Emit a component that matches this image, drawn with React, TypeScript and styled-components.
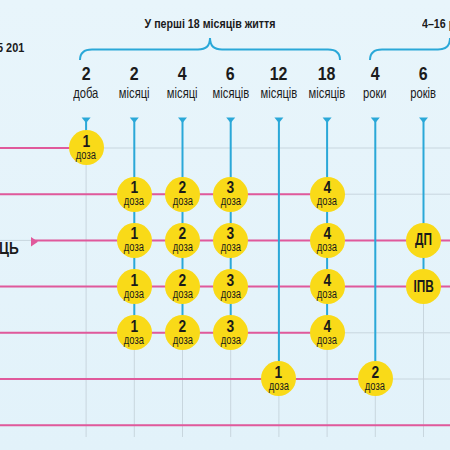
import styled, { createGlobalStyle, css } from "styled-components";

const COLS = [
  { num: "2", unit: "доба" },
  { num: "2", unit: "місяці" },
  { num: "4", unit: "місяці" },
  { num: "6", unit: "місяців" },
  { num: "12", unit: "місяців" },
  { num: "18", unit: "місяців" },
  { num: "4", unit: "роки" },
  { num: "6", unit: "років" },
];

type Dose = { row: number; col: number; num?: string; tag?: string };

const DOSES: Dose[] = [
  { row: 0, col: 0, num: "1" },
  ...[1, 2, 3, 4].flatMap((row) => [
    { row, col: 1, num: "1" },
    { row, col: 2, num: "2" },
    { row, col: 3, num: "3" },
    { row, col: 5, num: "4" },
  ]),
  { row: 2, col: 7, tag: "ДП" },
  { row: 3, col: 7, tag: "ІПВ" },
  { row: 5, col: 4, num: "1" },
  { row: 5, col: 6, num: "2" },
];

// pink row lines: [from x, to x]
const ROWS: [number, number][] = [
  [0, 86],
  [0, 327],
  [33, 450],
  [0, 450],
  [0, 327],
  [0, 375],
  [0, 450],
];

// row index where the blue column line stops
const COL_END = [0, 4, 4, 4, 5, 4, 5, 3];

const colX = (i: number) => 86.1 + i * 48.2;
const rowY = (i: number) => 148 + i * 46.2;

const PINK = "#e0599b";
const BLUE = "#2aa8d8";
const GRID = "#c8d6de";

// condensed look: no narrow face installed, so squeeze Liberation Sans
const narrow = (k: number, origin = "center") => css`
  display: inline-block;
  transform: scaleX(${k});
  transform-origin: ${origin};
`;

const GlobalStyle = createGlobalStyle`
  html, body {
    margin: 0;
    background: #e4f3fa;
    overflow: hidden;
  }
`;

const Page = styled.div`
  position: relative;
  width: 450px;
  height: 450px;
  overflow: hidden;
  background: linear-gradient(#e8f5fb, #e2f2fa);
  font-family: "Liberation Sans", Arial, sans-serif;
  color: #1b1b1b;
`;

const Lines = styled.svg`
  position: absolute;
  left: 0;
  top: 0;
`;

const Chart = styled.div`
  position: relative;
  display: grid;
  grid-template-columns: 62px repeat(8, 48.2px);
  grid-template-rows: 34px 28px 24px 14px 24.9px repeat(7, 46.2px);
`;

const Title = styled.div<{ $from: number; $to: number; $shift: number }>`
  grid-row: 1;
  grid-column: ${(p) => p.$from} / ${(p) => p.$to};
  align-self: end;
  justify-self: ${(p) => (p.$shift ? "start" : "center")};
  margin: 0 0 2px ${(p) => p.$shift}px;
  padding-left: ${(p) => (p.$shift ? 0 : 9)}px;
  white-space: nowrap;
  font-weight: 700;
  font-size: 13px;
  line-height: 16px;
  ${(p) => narrow(0.82, p.$shift ? "left" : "center")}
`;

const Note = styled.div`
  grid-row: 2;
  grid-column: 1;
  align-self: center;
  justify-self: start;
  margin-left: -3px;
  white-space: nowrap;
  font-weight: 700;
  font-size: 13px;
  line-height: 14px;
  ${narrow(0.84, "left")}
`;

const Side = styled.div<{ $row: number }>`
  grid-row: ${(p) => p.$row + 6};
  grid-column: 1;
  align-self: end;
  justify-self: start;
  margin: 0 0 4px -1px;
  font-weight: 700;
  font-size: 17px;
  line-height: 20px;
  ${narrow(0.8, "left")}
`;

const Num = styled.div<{ $col: number }>`
  grid-row: 3;
  grid-column: ${(p) => p.$col + 2};
  justify-self: center;
  align-self: center;
  font-weight: 700;
  font-size: 19px;
  line-height: 20px;
  ${narrow(0.84)}
`;

const Unit = styled.div<{ $col: number }>`
  grid-row: 4;
  grid-column: ${(p) => p.$col + 2};
  justify-self: center;
  align-self: center;
  white-space: nowrap;
  font-size: 14px;
  line-height: 14px;
  ${narrow(0.8)}
`;

const Circle = styled.div<{ $row: number; $col: number }>`
  grid-row: ${(p) => p.$row + 6};
  grid-column: ${(p) => p.$col + 2};
  justify-self: center;
  align-self: center;
  width: 35px;
  height: 35px;
  border-radius: 50%;
  background: #f9da18;
  display: flex;
  flex-direction: column;
  align-items: center;
  justify-content: center;
  color: #1a1a1a;
`;

const DoseNum = styled.span`
  font-weight: 700;
  font-size: 16px;
  line-height: 14px;
  ${narrow(0.86)}
`;

const DoseWord = styled.span`
  font-size: 12px;
  line-height: 12px;
  ${narrow(0.78)}
`;

const Tag = styled.span`
  font-weight: 700;
  font-size: 16px;
  line-height: 16px;
  ${narrow(0.74)}
`;

export default function App() {
  return (
    <Page>
      <GlobalStyle />
      <Lines width={450} height={450} viewBox="0 0 450 450">
        {COLS.map((_, i) => (
          <line key={"gv" + i} x1={colX(i)} x2={colX(i)} y1={124} y2={437} stroke={GRID} strokeWidth={1} />
        ))}
        {ROWS.map((_, r) => (
          <line key={"gh" + r} x1={0} x2={450} y1={rowY(r)} y2={rowY(r)} stroke={GRID} strokeWidth={1} />
        ))}
        {ROWS.map(([a, b], r) => (
          <line key={"p" + r} x1={a} x2={b} y1={rowY(r)} y2={rowY(r)} stroke={PINK} strokeWidth={2} />
        ))}
        <polygon points="31,237 31,246.5 38,241.7" fill={PINK} />
        {COL_END.map((end, i) => (
          <g key={"b" + i}>
            <line x1={colX(i)} x2={colX(i)} y1={120} y2={rowY(end)} stroke={BLUE} strokeWidth={2} />
            <polygon points={`${colX(i) - 4.5},117.5 ${colX(i) + 4.5},117.5 ${colX(i)},123`} fill={BLUE} />
          </g>
        ))}
        <path
          d="M80,60 C80,53 84,49.5 92,49.5 L198,49.5 C205,49.5 210,46 210,38 C210,46 215,49.5 222,49.5 L328,49.5 C336,49.5 340,53 340,60"
          fill="none"
          stroke={BLUE}
          strokeWidth={2}
        />
        <path
          d="M370,60 C370,53 374,49.5 382,49.5 L438,49.5 C445,49.5 450,46 450,38"
          fill="none"
          stroke={BLUE}
          strokeWidth={2}
        />
      </Lines>
      <Chart>
        <Title $from={2} $to={8} $shift={0}>У перші 18 місяців життя</Title>
        <Title $from={9} $to={10} $shift={23}>4–16 років</Title>
        <Note>5 201</Note>
        {COLS.map((c, i) => (
          <Num key={"n" + i} $col={i}>{c.num}</Num>
        ))}
        {COLS.map((c, i) => (
          <Unit key={"u" + i} $col={i}>{c.unit}</Unit>
        ))}
        <Side $row={2}>ЦЬ</Side>
        {DOSES.map((d, i) => (
          <Circle key={"d" + i} $row={d.row} $col={d.col}>
            {d.tag ? (
              <Tag>{d.tag}</Tag>
            ) : (
              <>
                <DoseNum>{d.num}</DoseNum>
                <DoseWord>доза</DoseWord>
              </>
            )}
          </Circle>
        ))}
      </Chart>
    </Page>
  );
}
